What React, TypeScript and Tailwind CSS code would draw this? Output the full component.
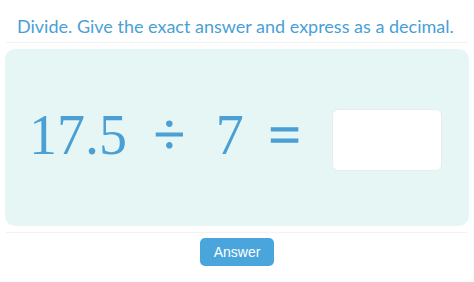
export default function App() {
  return (
    <div className="w-[474px] h-[282px] bg-white overflow-hidden relative">
      <div className="pt-[14px] pl-[17px] h-[42px] text-[18px] leading-[24px] text-[#4a9fd5]" style={{ fontFamily: 'Lato, "Noto Sans", sans-serif' }}>
        Divide. Give the exact answer and express as a decimal.
      </div>
      <div className="mx-[6px] border-t border-[#f1f4f4]" />
      <div className="mx-[5px] mt-[6px] h-[177px] rounded-[10px] bg-[#e6f6f4] flex items-center pl-[24px] pb-[6px]">
        <div className="flex items-center text-[#4a9fd5] text-[56px] leading-none" style={{ fontFamily: '"Liberation Serif", "Times New Roman", serif' }}>
          <span>17.5</span>
          <span className="ml-[27px] [-webkit-text-stroke:1.2px_#4a9fd5]">÷</span>
          <span className="ml-[31px]">7</span>
          <span className="ml-[25px] [-webkit-text-stroke:1.5px_#4a9fd5]">=</span>
        </div>
        <div className="ml-[32px] mt-[10px] w-[110px] h-[62px] rounded-[6px] bg-white border border-[#e3eeee]" />
      </div>
      <div className="mx-[6px] mt-[6px] border-t border-[#f1f4f4]" />
      <div className="flex justify-center mt-[5px]">
        <button className="w-[74px] h-[28px] rounded-[5px] bg-[#4aa5dc] text-white text-[14px]" style={{ fontFamily: '"Liberation Sans", Arial, sans-serif' }}>
          Answer
        </button>
      </div>
    </div>
  );
}
